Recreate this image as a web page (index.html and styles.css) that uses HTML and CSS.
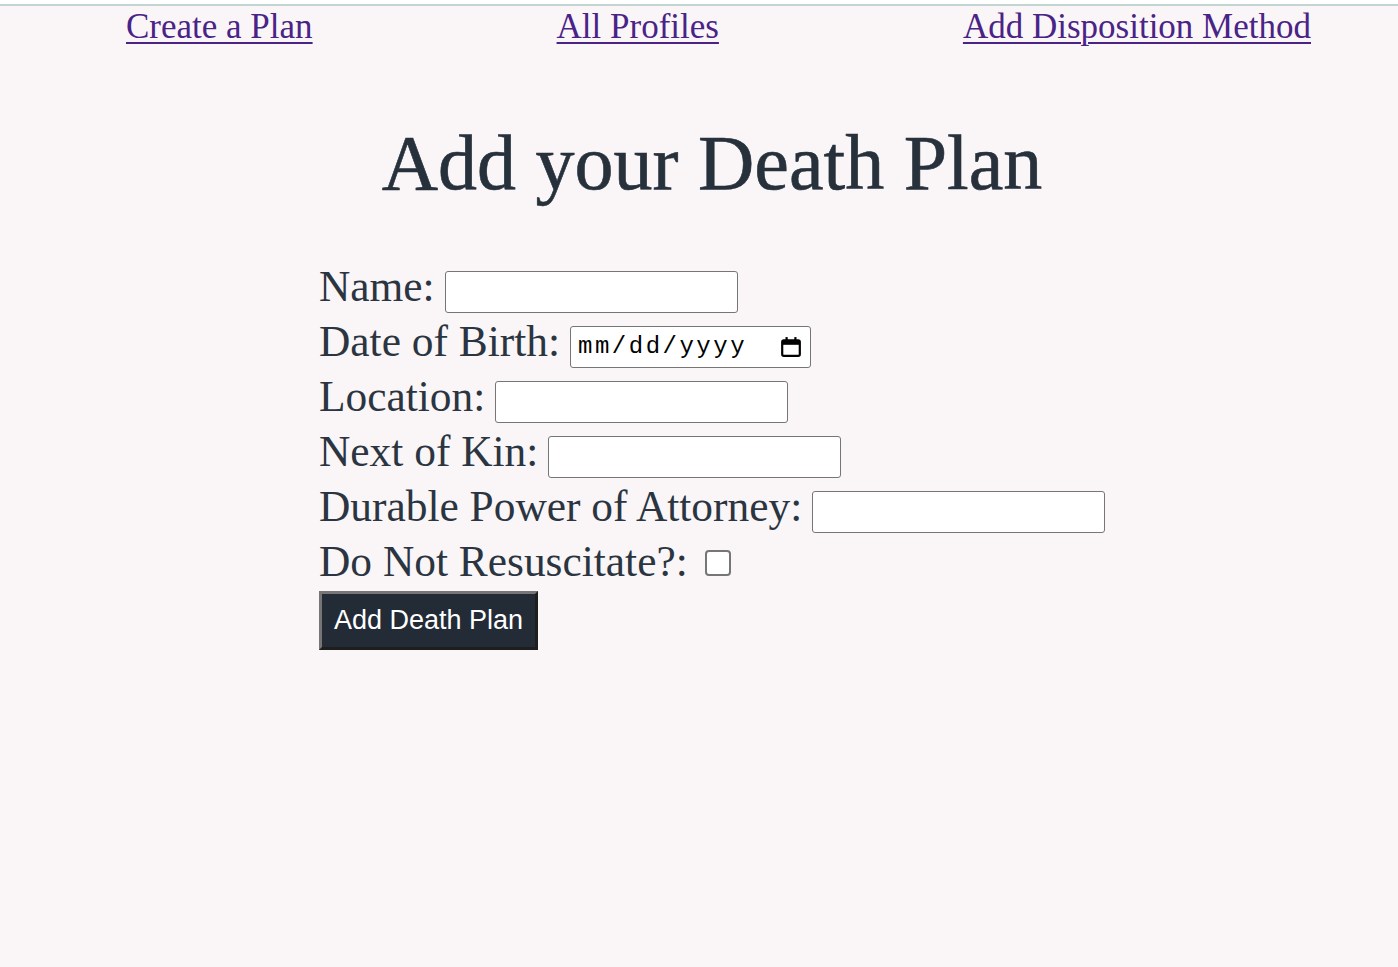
FILE: index.html
```html
<!DOCTYPE html>
<html>
<head>
<meta charset="utf-8">
<title>Add your Death Plan</title>
<link rel="stylesheet" href="styles.css">
</head>
<body>
<div class="topline"></div>
<nav class="nav">
  <a href="#">Create a Plan</a>
  <a href="#">All Profiles</a>
  <a href="#">Add Disposition Method</a>
</nav>
<h1 class="title">Add your Death Plan</h1>
<form class="plan-form">
  <div class="row"><label>Name:</label><input type="text" class="field"></div>
  <div class="row"><label>Date of Birth:</label><span class="field date"><span class="date-text">mm/dd/yyyy</span><svg class="cal" width="22" height="22" viewBox="0 0 20 20"><rect x="2" y="4" width="16" height="14" rx="1.5" fill="none" stroke="#000" stroke-width="2"/><rect x="2" y="4" width="16" height="4" fill="#000"/><rect x="5" y="1" width="2" height="4" fill="#000"/><rect x="13" y="1" width="2" height="4" fill="#000"/></svg></span></div>
  <div class="row"><label>Location:</label><input type="text" class="field"></div>
  <div class="row"><label>Next of Kin:</label><input type="text" class="field"></div>
  <div class="row"><label>Durable Power of Attorney:</label><input type="text" class="field"></div>
  <div class="row"><label>Do Not Resuscitate?:</label><span class="check"></span></div>
  <div class="row"><button type="button" class="submit">Add Death Plan</button></div>
</form>
</body>
</html>
```
FILE: styles.css
```css
html, body {
  margin: 0;
  padding: 0;
}
body {
  background: #faf6f7;
  font-family: "Liberation Serif", "DejaVu Serif", serif;
  color: #2b3541;
  min-height: 967px;
}
.topline {
  height: 4px;
  background: #ffffff;
  border-bottom: 2px solid #c3d5d3;
}
.nav {
  display: flex;
  justify-content: space-between;
  padding: 0 87px 0 126px;
  height: 46px;
  align-items: flex-start;
}
.nav a {
  color: #4a2387;
  font-size: 35px;
  line-height: 42px;
  text-decoration: underline;
  text-decoration-thickness: 2px;
  text-underline-offset: 4px;
}
.title {
  margin: 66px 0 0;
  padding-left: 26px;
  text-align: center;
  font-size: 78px;
  font-weight: normal;
  line-height: 90px;
  color: #27313c;
  -webkit-text-stroke: 0.6px #27313c;
}
.plan-form {
  margin: 50px 0 0 319px;
  display: flex;
  flex-direction: column;
}
.row {
  display: flex;
  align-items: center;
  height: 55px;
  font-size: 43.4px;
}
.row label {
  margin-right: 10px;
}
.field {
  box-sizing: border-box;
  width: 293px;
  height: 42px;
  border: 1.5px solid #767676;
  border-radius: 3px;
  background: #ffffff;
  margin-top: 12px;
}
.date {
  display: flex;
  align-items: center;
  justify-content: space-between;
  width: 241px;
  padding: 0 8px 0 7px;
}
.date-text {
  font-family: "Liberation Mono", monospace;
  font-size: 24px;
  color: #000;
  letter-spacing: 2.5px;
}
.cal {
  display: block;
}
.check {
  box-sizing: border-box;
  width: 26px;
  height: 26px;
  border: 2px solid #767676;
  border-radius: 4px;
  background: #fff;
  margin-left: 7px;
  margin-top: 4px;
}
.submit {
  box-sizing: border-box;
  width: 219px;
  height: 59px;
  margin-top: 9px;
  background: #222b36;
  color: #ffffff;
  font-family: "Liberation Sans", Arial, sans-serif;
  font-size: 27px;
  border: 3px solid;
  border-color: #767676 #1e1e1e #1e1e1e #767676;
  padding: 0;
}
```
